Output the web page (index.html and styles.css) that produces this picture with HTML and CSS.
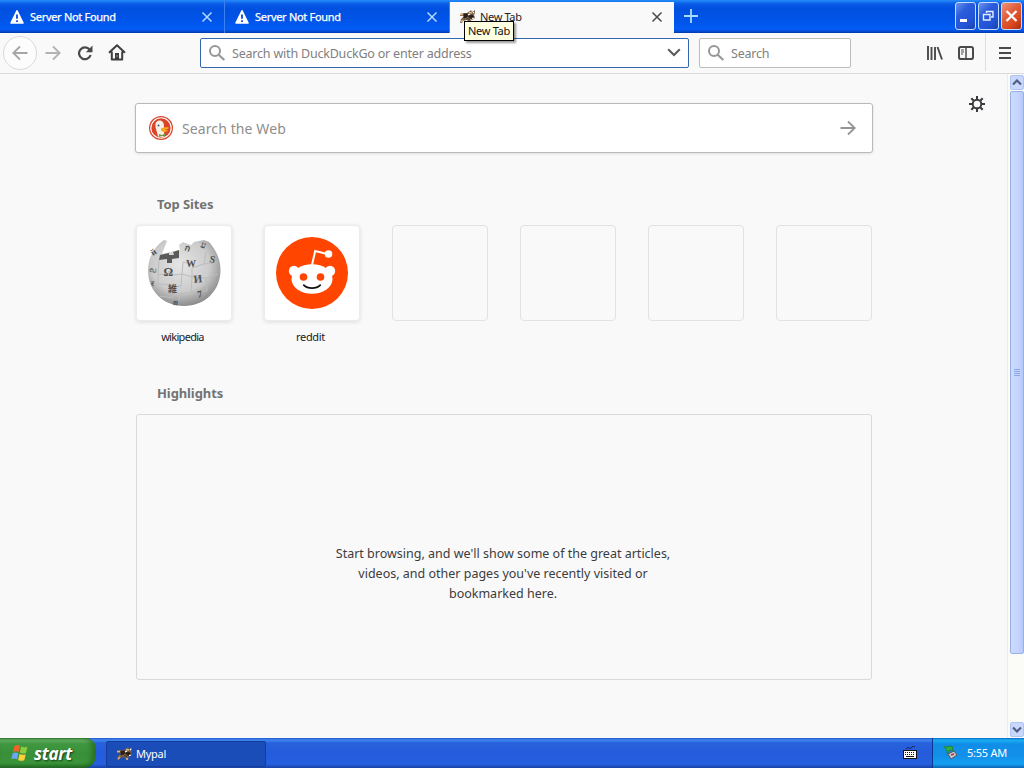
FILE: index.html
```html
<!DOCTYPE html>
<html lang="en">

<head>
    <meta charset="UTF-8">
    <meta name="viewport" content="width=device-width, initial-scale=1.0">
    <title>New Tab</title>
    <link rel="stylesheet" href="styles.css">
</head>

<body>
    <svg class="defs" width="0" height="0">
        <symbol id="warn" viewBox="0 0 14 14">
            <path d="M7 .8 13 13H1Z" fill="#fff" stroke="#fff" stroke-width="1.6" stroke-linejoin="round" />
            <path d="M7 4.5v4.2M7 10.2v1.8" stroke="#0a4bd8" stroke-width="1.8" />
        </symbol>
        <symbol id="cross" viewBox="0 0 12 12">
            <path d="M1.5 1.5l9 9M10.5 1.5l-9 9" fill="none" stroke="currentColor" stroke-width="1.5" />
        </symbol>
        <symbol id="glass" viewBox="0 0 18 18">
            <circle cx="7" cy="7" r="5" fill="none" stroke="#979799" stroke-width="2" />
            <path d="M10.7 10.7l5.6 5.3" stroke="#979799" stroke-width="2.2" />
        </symbol>
        <symbol id="arrow" viewBox="0 0 18 16">
            <path d="M1.5 8h14M9 1.5 15.7 8 9 14.5" fill="none" stroke="currentColor" stroke-width="1.8" />
        </symbol>
        <symbol id="raccoon" viewBox="0 0 16 14">
            <path d="M0 4l4-1 3 0 3-2 1-1 1 2 3-2v3l-1 2 1 3-3 2-2-1 2 3H9L7 10l-4 1-1 2H0l1-4 3-3H0z" fill="#7a6049" />
            <path d="M0 4.500h3M9 2.500l3 .5M1 12l2-2M9 12h2" stroke="#d9b987" stroke-width="1.300" />
            <path d="M4 4l4 0-1 3-3 1zM8 6l4-1 2 2-3 1.500zM7 8.500l3 1" fill="#2b1e18" stroke="#2b1e18" stroke-width=".8" />
            <path d="M8 5l2-1M12 8.500l2-.5M13 3l1-1" stroke="#fff" stroke-width="1.200" />
        </symbol>
        <symbol id="chev" viewBox="0 0 10 7">
            <path d="M1 5.5 5 1.5l4 4" fill="none" stroke="#4d6185" stroke-width="2.2" />
        </symbol>
    </svg>

    <div class="tabs">
        <div class="tab">
            <svg class="tab-icon" width="14" height="14"><use href="#warn" /></svg>
            <span class="tab-name">Server Not Found</span>
            <svg class="close" width="12" height="12"><use href="#cross" /></svg>
        </div>
        <div class="tab">
            <svg class="tab-icon" width="14" height="14"><use href="#warn" /></svg>
            <span class="tab-name">Server Not Found</span>
            <svg class="close" width="12" height="12"><use href="#cross" /></svg>
        </div>
        <div class="tab active">
            <svg class="tab-icon" width="16" height="14"><use href="#raccoon" /></svg>
            <span class="tab-name">New Tab</span>
            <svg class="close" width="12" height="12"><use href="#cross" /></svg>
            <div class="tooltip">New Tab</div>
        </div>
        <svg class="plus" width="14" height="14" viewBox="0 0 14 14">
            <path d="M7 0v14M0 7h14" stroke="#a9dcff" stroke-width="1.8" />
        </svg>
        <div class="win-buttons">
            <div class="win"><svg width="19" height="26" viewBox="0 0 19 26"><path d="M4 17.500h7" stroke="#fff" stroke-width="3" /></svg></div>
            <div class="win"><svg width="19" height="26" viewBox="0 0 19 26"><path d="M7.500 10V8.500h6.500v5.500h-2M4.500 11.500h6.500v5.500h-6.500z" fill="none" stroke="#e4edff" stroke-width="1.400" /></svg></div>
            <div class="win red"><svg width="19" height="26" viewBox="0 0 19 26"><path d="M4.500 8l10 10M14.500 8l-10 10" stroke="#fff" stroke-width="2.200" /></svg></div>
        </div>
    </div>

    <div class="toolbar">
        <div class="back"><svg class="flip" width="18" height="16"><use href="#arrow" /></svg></div>
        <svg class="forward" width="18" height="16"><use href="#arrow" /></svg>
        <svg class="reload" width="16" height="16" viewBox="0 0 16 16">
            <path d="M12.700 4.800A5.900 5.900 0 1 0 13.600 10" fill="none" stroke="#4a4a4c" stroke-width="2.200" />
            <path d="M15.500.5v6.700H8.800z" fill="#4a4a4c" />
        </svg>
        <svg class="home" width="18" height="17" viewBox="0 0 18 17">
            <path d="M1 8.700 9 1.300l8 7.400M3.800 7.500v8h10.400v-8" fill="none" stroke="#3e3e40" stroke-width="2" stroke-linejoin="round" />
            <path d="M7 15.500V9h4v6.500z" fill="#3e3e40" />
            <path d="M8.500 12h1" stroke="#fff" />
        </svg>
        <div class="urlbar">
            <svg width="18" height="18"><use href="#glass" /></svg>
            <span class="url-text">Search with DuckDuckGo or enter address</span>
            <svg class="drop" width="14" height="9" viewBox="0 0 14 9"><path d="M1.200 1.300 7 7l5.800-5.700" fill="none" stroke="#5a5a5c" stroke-width="2" /></svg>
        </div>
        <div class="searchbar">
            <svg width="18" height="18"><use href="#glass" /></svg>
            <span>Search</span>
        </div>
        <svg class="library" width="16" height="14" viewBox="0 0 16 14">
            <path d="M1 0v14M4.500 1v13M8 1v13M10.500 1l4.500 12.500" stroke="#4a4a4c" stroke-width="1.900" />
        </svg>
        <svg class="sidebar" width="16" height="14" viewBox="0 0 16 14">
            <rect x="1" y="1" width="14" height="12" rx="1.800" fill="none" stroke="#4a4a4c" stroke-width="2" />
            <path d="M8 1v12" stroke="#4a4a4c" stroke-width="1.500" />
            <path d="M3 4h3M3 6h3M3 8h2" stroke="#4a4a4c" />
        </svg>
        <div class="menu">
            <svg width="12" height="12" viewBox="0 0 12 12"><path d="M0 1h12M0 6h12M0 11h12" stroke="#4a4a4c" stroke-width="1.800" /></svg>
        </div>
    </div>

    <div class="view">
        <div class="page">
            <svg class="gear" width="16" height="16" viewBox="0 0 16 16">
                <circle cx="8" cy="8" r="4.300" fill="none" stroke="#38383d" stroke-width="1.900" />
                <path d="M8 0v3M8 13v3M0 8h3M13 8h3M2.300 2.300l2.200 2.200M11.500 11.500l2.200 2.200M2.300 13.700l2.200-2.200M11.500 4.500l2.200-2.200" stroke="#38383d" stroke-width="2" />
            </svg>
            <div class="web-search">
                <svg class="duck" width="24" height="24" viewBox="0 0 24 24">
                    <circle cx="12" cy="12" r="12" fill="#dc4429" />
                    <circle cx="12" cy="12" r="10.200" fill="none" stroke="#fff" stroke-width="1.100" />
                    <path d="M9 20.500C8 15 6 12 6.500 8c.3-2.500 2.500-4 5-3.500 2.500.5 3.500 2.500 3.500 6 0 4 0 7 .5 10-2.500 1-4 1-6.500 0z" fill="#f6efe4" />
                    <path d="M12 12.500c2-1.200 5-1.700 8-1-1 2-3 1.800-4 2.200 1.500.6 2.500.6 3.500.3-1.500 2.500-6.500 2.500-7.500.3z" fill="#f6a91b" />
                    <path d="M10 18l3 1 3-1.500v3l-3-.5-3 1z" fill="#6f9a45" />
                    <circle cx="9.500" cy="9.500" r="1" fill="#3a5678" />
                </svg>
                <span>Search the Web</span>
                <svg class="go" width="18" height="16"><use href="#arrow" /></svg>
            </div>

            <h2>Top Sites</h2>
            <div class="sites">
                <div class="site">
                    <div class="tile">
                        <svg width="74" height="70" viewBox="0 0 74 70">
                            <defs>
                                <radialGradient id="globe" cx="45%" cy="38%" r="62%">
                                    <stop offset="0" stop-color="#e6e6e6" />
                                    <stop offset=".65" stop-color="#cbcbcb" />
                                    <stop offset="1" stop-color="#8c8c8c" />
                                </radialGradient>
                            </defs>
                            <path d="M17 2l3 1-5 13 8-2 10-2-1-5 4-3 8 3 3-3 10-2 5 2C69 12 73.500 21 73.500 32c0 21-16 36-36.500 36S1 53 1 33C1 20 7 9 17 2z" fill="url(#globe)" />
                            <path d="M13 17l9-2v2h5l-1-3 6-2v8l-7 1v4h-5v-4l-8 1z" fill="#5a5a5a" />
                            <path d="M12 22l-1 14 9 1 2-4 4 4 9-1 1-12 8 2M35 36l-1 12-7 1-1 11-13-2M11 36v10l12 1M35 36l10 3v-9l12-4 2-12M45 39l-1 15-13 2M45 39l14 1 1 13-16 1M59 40l12-4M57 26l14-2M33 56l-2 12" fill="none" stroke="#bcbcbc" />
                            <g class="glyphs">
                                <text x="16.500" y="38" font-size="12">Ω</text>
                                <text x="39" y="29" font-size="10">W</text>
                                <text x="47" y="45" font-size="11" transform="rotate(-6 47 45)">И</text>
                                <text x="62" y="24" font-size="10" transform="rotate(12 62 24)">S</text>
                                <text x="21" y="54" font-size="9">維</text>
                                <text x="51" y="60" font-size="10" transform="rotate(-12 51 60)">7</text>
                                <text x="2" y="34" font-size="8">வ</text>
                                <text x="6" y="18" font-size="9" transform="rotate(-35 6 18)">й</text>
                                <text x="37" y="12" font-size="9" transform="rotate(20 37 12)">ก</text>
                                <text x="53" y="9" font-size="9" transform="rotate(20 53 9)">ע</text>
                                <text x="4" y="48" font-size="7">र</text>
                                <text x="26" y="66" font-size="7">ஐ</text>
                            </g>
                        </svg>
                    </div>
                    <span class="site-name">wikipedia</span>
                </div>
                <div class="site">
                    <div class="tile">
                        <svg width="72" height="72" viewBox="0 0 72 72">
                            <circle cx="36" cy="36" r="36" fill="#ff4500" />
                            <path d="M36 28l3.200-14 12 3" fill="none" stroke="#fff" stroke-width="2" />
                            <circle cx="52.500" cy="17" r="3.800" fill="#fff" />
                            <circle cx="18" cy="34" r="5.200" fill="#fff" />
                            <circle cx="54" cy="34" r="5.200" fill="#fff" />
                            <ellipse cx="36" cy="42" rx="20.500" ry="14.800" fill="#fff" />
                            <circle cx="27.500" cy="40" r="3.800" fill="#ff4500" />
                            <circle cx="44.500" cy="40" r="3.800" fill="#ff4500" />
                            <path d="M27.800 48.200c4 4 12.400 4 16.400 0" fill="none" stroke="#111" stroke-width="1.800" stroke-linecap="round" />
                        </svg>
                    </div>
                    <span class="site-name">reddit</span>
                </div>
                <div class="site"><div class="tile empty"></div></div>
                <div class="site"><div class="tile empty"></div></div>
                <div class="site"><div class="tile empty"></div></div>
                <div class="site"><div class="tile empty"></div></div>
            </div>

            <h2>Highlights</h2>
            <div class="highlights">
                <p>Start browsing, and we'll show some of the great articles,<br>videos, and other pages you've recently visited or<br>bookmarked here.</p>
            </div>
        </div>
        <div class="scroll">
            <div class="scroll-btn"><svg width="10" height="7"><use href="#chev" /></svg></div>
            <div class="thumb"><i></i><i></i><i></i><i></i></div>
            <div class="scroll-btn down"><svg width="10" height="7"><use href="#chev" /></svg></div>
        </div>
    </div>

    <div class="taskbar">
        <div class="start">
            <svg width="18" height="18" viewBox="0 0 18 18">
                <path d="M3.500 2q3-1.800 5.500-.2L7.700 8Q5 6.500 2 8z" fill="#f0642c" />
                <path d="M10 2.500q3 1.500 6.500.2L15 9q-3 1.200-6.200-.3z" fill="#8ccc3e" />
                <path d="M1.700 9.200q3-1.500 5.700 0L6 15.300q-2.700-1.600-5.700 0z" fill="#6ea5f5" />
                <path d="M8.500 9.900q3 1.500 6.300.3l-1.500 6q-3 1.400-6.200-.2z" fill="#fcd03a" />
            </svg>
            <span>start</span>
        </div>
        <div class="task">
            <svg width="16" height="14"><use href="#raccoon" /></svg>
            <span>Mypal</span>
        </div>
        <svg class="keyboard" width="14" height="14" viewBox="0 0 14 14">
            <path d="M3 3q1-2 3-1t3-1 3 0" fill="none" stroke="#16235c" />
            <rect x=".5" y="4.500" width="13" height="8" fill="#fff" stroke="#111" />
            <path d="M2 6.500h10M2 8.500h10" stroke="#111" stroke-dasharray="1 1" />
            <path d="M3 10.500h8" stroke="#111" />
        </svg>
        <div class="tray">
            <svg width="15" height="15" viewBox="0 0 15 15">
                <path d="M5 9l6-3 3 4-6 4z" fill="#c9c9cf" stroke="#55555f" />
                <path d="M8 10l3-1" stroke="#a33" stroke-width="1.500" />
                <path d="M1 2l8-1 1 5-3-1-3 4 0-4z" fill="#2fae3c" stroke="#1b7a2b" stroke-width=".7" />
            </svg>
            <span>5:55 AM</span>
        </div>
    </div>
</body>

</html>
```
FILE: styles.css
```css
* {
    margin: 0;
    padding: 0;
    box-sizing: border-box;
}

body {
    width: 1024px;
    height: 768px;
    overflow: hidden;
    display: flex;
    flex-direction: column;
    background: #f9f9fa;
    font-family: "Noto Sans", "Noto Sans CJK SC", sans-serif;
}

svg {
    display: block;
    flex: none;
}

span {
    white-space: nowrap;
}

.defs {
    position: absolute;
}

/* tabs */
.tabs {
    height: 33px;
    flex: none;
    display: flex;
    background: linear-gradient(#2a8cf8 0, #1c80f6 1px, #0a5ae6 4px, #0050e0 9px, #0054e8 20px, #025cf5 29px, #0550dc 31px, #0137a8 33px);
}

.tab {
    position: relative;
    width: 225px;
    display: flex;
    align-items: center;
    padding: 0 11px 0 10px;
    border-right: 1px solid #3b83f2;
    color: #b5d8ff;
    font-size: 11px;
}

.tab-icon {
    margin-right: 6px;
}

.tab-name {
    flex: 1;
    color: #fff;
    letter-spacing: -.3px;
    -webkit-text-stroke: .25px #fff;
}

.tab.active {
    width: 224px;
    margin-top: 2px;
    padding: 0 11px 2px 10px;
    border: 0;
    background: #f9f9fa;
    color: #4a4a4c;
}

.active .tab-icon {
    margin-right: 4px;
}

.active .tab-name {
    color: #222;
    letter-spacing: -.35px;
    -webkit-text-stroke: 0;
}

.tooltip {
    position: absolute;
    z-index: 5;
    left: 14px;
    top: 19px;
    width: 50px;
    height: 20px;
    border: 1px solid #000;
    background: #ffffe1;
    box-shadow: 2px 2px 2px rgba(0, 0, 0, .4);
    line-height: 18px;
    letter-spacing: -.3px;
    text-align: center;
    color: #111;
}

.plus {
    margin: 9px 0 0 10px;
}

.win-buttons {
    display: flex;
    gap: 2px;
    margin: 2px 2px 0 auto;
}

.win {
    width: 21px;
    height: 28px;
    border: 1px solid #c5dbff;
    border-radius: 3px;
    background: linear-gradient(135deg, #6c92ef, #2b5cdb 35%, #2254d6 70%, #1743ae);
}

.win.red {
    background: linear-gradient(135deg, #ee9478, #e05f3e 40%, #d9481f 70%, #a82c10);
}

/* toolbar */
.toolbar {
    height: 41px;
    flex: none;
    display: flex;
    align-items: center;
    padding: 0 0 1px 3px;
    border-bottom: 1px solid #d7dade;
    background: #f9f9fa;
    font-size: 12.5px;
    letter-spacing: -.2px;
    color: #808080;
}

.toolbar span {
    padding-top: 1px;
}

.back {
    width: 34px;
    height: 34px;
    display: flex;
    align-items: center;
    justify-content: center;
    border: 1px solid #dadada;
    border-radius: 50%;
    background: #fcfcfc;
    color: #a6a6a7;
}

.flip {
    transform: scaleX(-1);
}

.forward {
    margin-left: 7px;
    color: #b2b2b3;
}

.reload {
    margin-left: 15px;
}

.home {
    margin-left: 15px;
}

.urlbar,
.searchbar {
    height: 30px;
    display: flex;
    align-items: center;
    gap: 6px;
    padding-left: 7px;
    border: 1px solid #bdbdc0;
    border-radius: 2px;
    background: #fff;
}

.urlbar {
    width: 489px;
    margin-left: 74px;
    padding-right: 7px;
    border-color: #3567b0;
}

.url-text {
    flex: 1;
}

.searchbar {
    width: 152px;
    margin-left: 10px;
}

.library {
    margin-left: 76px;
}

.sidebar {
    margin-left: 15px;
}

.menu {
    height: 37px;
    display: flex;
    align-items: center;
    margin-left: 11px;
    padding-left: 13px;
    border-left: 1px solid #dedee0;
}

/* new tab page */
.view {
    flex: 1;
    display: flex;
    min-height: 0;
}

.page {
    position: relative;
    flex: 1;
    padding: 29px 134px 0 135px;
}

.gear {
    position: absolute;
    right: 22px;
    top: 22px;
}

.web-search {
    width: 738px;
    height: 50px;
    display: flex;
    align-items: center;
    gap: 9px;
    padding: 0 15px 0 13px;
    border: 1px solid #b9b9bb;
    border-radius: 3px;
    background: #fff;
    box-shadow: 0 1px 3px rgba(0, 0, 0, .1);
    font-size: 14px;
    letter-spacing: .1px;
    color: #8e8e8e;
}

.go {
    margin-left: auto;
    color: #959597;
}

h2 {
    margin-left: 22px;
    font-size: 13px;
    line-height: 20px;
    letter-spacing: -.1px;
    color: #737373;
}

.web-search + h2 {
    margin-top: 41px;
}

.sites {
    display: flex;
    gap: 32px;
    height: 158px;
    margin: 11px 0 0 1px;
}

.site {
    width: 96px;
    flex: none;
    text-align: center;
}

.tile {
    height: 96px;
    display: flex;
    align-items: center;
    justify-content: center;
    border: 1px solid #ececed;
    border-radius: 4px;
    background: #fff;
    box-shadow: 0 1px 4px rgba(12, 12, 13, .12);
}

.tile.empty {
    border-color: #e2e2e3;
    background: none;
    box-shadow: none;
}

.site-name {
    display: block;
    margin: 8px 3px 0 0;
    font-size: 11px;
    line-height: 16px;
    letter-spacing: -.7px;
    color: #222;
}

.site + .site .site-name {
    letter-spacing: -.35px;
}

.glyphs {
    font-family: "Liberation Serif", "Noto Sans CJK JP", serif;
    font-weight: bold;
    fill: #505050;
}

.highlights {
    width: 736px;
    height: 266px;
    margin: 11px 0 0 1px;
    padding: 129px 2px 0 0;
    border: 1px solid #d9d9dc;
    border-radius: 3px;
    text-align: center;
    font-size: 12.5px;
    line-height: 20px;
    color: #3c3c3c;
}

/* scrollbar */
.scroll {
    width: 18px;
    flex: none;
    display: flex;
    flex-direction: column;
    padding: 1px 1px 1px 2px;
    border-left: 1px solid #eeede5;
    background: #fbfbf7;
}

.scroll-btn {
    width: 14px;
    height: 15px;
    display: flex;
    align-items: center;
    justify-content: center;
    border: 1px solid #b0c4f3;
    border-radius: 2px;
    background: #c9d7fc;
}

.down {
    margin-top: auto;
}

.down svg {
    transform: scaleY(-1);
}

.thumb {
    width: 14px;
    height: 563px;
    display: flex;
    flex-direction: column;
    align-items: center;
    justify-content: center;
    gap: 1px;
    margin-top: 1px;
    border: 1px solid #98b1e4;
    border-radius: 2px;
    background: linear-gradient(90deg, #cbdafd, #c5d4fd 60%, #b5c8f8);
}

.thumb i {
    width: 6px;
    height: 1px;
    background: #8ca8e8;
}

/* taskbar */
.taskbar {
    height: 30px;
    flex: none;
    display: flex;
    align-items: center;
    background: linear-gradient(#2358cc 0, #3f87f0 2px, #2762dc 5px, #245bdb 15px, #2560df 26px, #1941a5 30px);
    color: #fff;
    font-size: 11px;
    letter-spacing: -.25px;
}

.start {
    width: 96px;
    height: 30px;
    display: flex;
    align-items: center;
    gap: 5px;
    padding-left: 11px;
    border-radius: 0 10px 12px 0;
    background: linear-gradient(#368438 0, #66b266 2px, #3f983f 6px, #388f38 16px, #3a953a 25px, #256d28 30px);
    box-shadow: inset -4px 0 5px rgba(20, 80, 20, .5);
    font: italic bold 17px "Open Sans", sans-serif;
    text-shadow: 1px 1px 2px rgba(0, 0, 0, .6);
}

.task {
    width: 160px;
    height: 26px;
    display: flex;
    align-items: center;
    gap: 3px;
    margin: 1px 0 0 10px;
    padding-left: 10px;
    border: 1px solid #143c98;
    border-radius: 2px;
    background: #1b4db8;
}

.keyboard {
    margin: 0 15px 0 auto;
}

.tray {
    width: 92px;
    height: 30px;
    display: flex;
    align-items: center;
    gap: 9px;
    padding: 0 0 2px 10px;
    border-left: 1px solid #0b3a92;
    background: linear-gradient(#0d66c4 0, #1ab0f2 2px, #118de8 6px, #1290e9 18px, #14a0f0 26px, #0c62b4 30px);
}
```
